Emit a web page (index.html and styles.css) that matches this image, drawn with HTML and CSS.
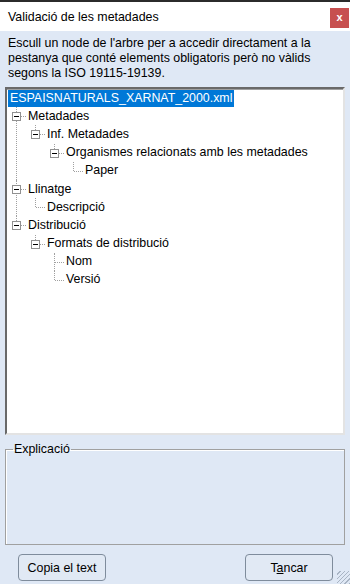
FILE: index.html
```html
<!DOCTYPE html>
<html lang="ca">
<head>
  <meta charset="UTF-8">
  <title>Validació de les metadades</title>
  <link rel="stylesheet" href="styles.css">
</head>
<body>
  <div class="window">
    <!-- Title bar -->
    <div class="titlebar">
      <span class="title">Validació de les metadades</span>
      <span class="close">x</span>
    </div>

    <div class="content">
      <p class="intro">Escull un node de l'arbre per a accedir directament a la<br>pestanya que conté elements obligatoris però no vàlids<br>segons la ISO 19115-19139.</p>

      <!-- Tree view -->
      <div class="tree">
        <ul class="level0">
          <li class="root">
            <div class="row"><span class="label selected">ESPAISNATURALS_XARNAT_2000.xml</span></div>
            <ul class="children top">
              <li>
                <div class="row"><span class="box"></span><span class="label">Metadades</span></div>
                <ul class="children">
                  <li>
                    <div class="row"><span class="box"></span><span class="label">Inf. Metadades</span></div>
                    <ul class="children">
                      <li>
                        <div class="row"><span class="box"></span><span class="label">Organismes relacionats amb les metadades</span></div>
                        <ul class="children">
                          <li class="leaf"><div class="row"><span class="twig"></span><span class="label">Paper</span></div></li>
                        </ul>
                      </li>
                    </ul>
                  </li>
                </ul>
              </li>
              <li>
                <div class="row"><span class="box"></span><span class="label">Llinatge</span></div>
                <ul class="children">
                  <li class="leaf"><div class="row"><span class="twig"></span><span class="label">Descripció</span></div></li>
                </ul>
              </li>
              <li>
                <div class="row"><span class="box"></span><span class="label">Distribució</span></div>
                <ul class="children">
                  <li>
                    <div class="row"><span class="box"></span><span class="label">Formats de distribució</span></div>
                    <ul class="children">
                      <li class="leaf"><div class="row"><span class="twig"></span><span class="label">Nom</span></div></li>
                      <li class="leaf"><div class="row"><span class="twig"></span><span class="label">Versió</span></div></li>
                    </ul>
                  </li>
                </ul>
              </li>
            </ul>
          </li>
        </ul>
      </div>

      <!-- Explanation group -->
      <fieldset class="group">
        <legend>Explicació</legend>
      </fieldset>

      <div class="buttons">
        <button type="button">Copia el text</button>
        <button type="button">T<u>a</u>ncar</button>
      </div>

      <div class="grip"></div>
    </div>
  </div>
</body>
</html>
```

FILE: styles.css
```css
body {
  margin: 0;
  font-family: "Segoe UI", "Liberation Sans", Arial, sans-serif;
  font-size: 12.4px;
  color: #000;
  background: #dfe8f5;
}
.window {
  width: 350px;
  height: 584px;
  display: flex;
  flex-direction: column;
  overflow: hidden;
}
.titlebar {
  height: 29px;
  flex: none;
  border-top: 2px solid #2b2b2b;
  background: #fff;
  display: flex;
  justify-content: space-between;
  align-items: center;
  padding-left: 8px;
}
.title { margin-top: 1px; }
.close {
  align-self: flex-start;
  margin-top: 6px;
  margin-right: 1px;
  width: 19px;
  height: 20px;
  background: #c75050;
  color: #fff;
  font-weight: bold;
  font-size: 11px;
  line-height: 19px;
  text-align: center;
}

.content {
  flex: 1;
  background: #dfe8f5;
  position: relative;
  display: flex;
  flex-direction: column;
}
.intro {
  margin: 5px 0 0 8px;
  line-height: 15px;
}

.tree {
  margin: 6px 5px 0 5px;
  height: 344px;
  flex: none;
  background: #fff;
  border-top: 2px solid #696969;
  border-left: 2px solid #696969;
  border-right: 2px solid #e3e3e3;
  border-bottom: 2px solid #e3e3e3;
  box-shadow: inset 0 1px 0 #a0a0a0;
}
.tree ul { list-style: none; margin: 0; padding: 0; }
.tree .children { padding-left: 19px; }
.tree .children.top { padding-left: 0; }
.tree li { position: relative; }
.row {
  height: 18.2px;
  display: flex;
  align-items: center;
}
.label {
  padding: 0 2px;
  line-height: 17px;
  white-space: nowrap;
}
.label.selected {
  background: #0078d7;
  color: #fff;
  margin-left: 1px;
}
.box, .twig {
  width: 19px;
  height: 18px;
  flex: none;
  position: relative;
}
/* vertical connector up to the row */
.children > li::before {
  content: "";
  position: absolute;
  left: 9px;
  top: 0;
  height: 9px;
  border-left: 1px dotted #a0a0a0;
}
.children > li:not(:last-child)::before { height: 100%; }
/* horizontal connector */
.children > li::after {
  content: "";
  position: absolute;
  left: 10px;
  top: 9px;
  width: 9px;
  border-top: 1px dotted #a0a0a0;
}
/* expand/collapse button */
.box::before {
  content: "";
  position: absolute;
  left: 5px;
  top: 5px;
  width: 7px;
  height: 7px;
  background: #fff;
  border: 1px solid #919191;
  z-index: 1;
}
.box::after {
  content: "";
  position: absolute;
  left: 7px;
  top: 9px;
  width: 5px;
  height: 1px;
  background: #000;
  z-index: 2;
}

.group {
  margin: 7px 5px 0 5px;
  padding: 0 7px;
  height: 101px;
  flex: none;
  border: 1px solid #a0a0a0;
  box-shadow: inset 1px 1px 0 #fff;
}
.group legend {
  padding: 0 1px;
  line-height: 15px;
}

.buttons {
  display: flex;
  justify-content: space-between;
  padding: 0 17px 0 18px;
  margin-top: 9px;
}
.buttons button {
  width: 88px;
  height: 27px;
  font-family: inherit;
  font-size: 12.4px;
  color: #000;
  background: #e1e9f4;
  border: 1px solid #7f8c9c;
  border-radius: 4px;
  padding: 0;
}
.grip {
  position: absolute;
  right: 0;
  bottom: 0;
  width: 13px;
  height: 13px;
  background: repeating-linear-gradient(135deg, transparent 0 2px, #a8b4c4 2px 3px);
}
```
